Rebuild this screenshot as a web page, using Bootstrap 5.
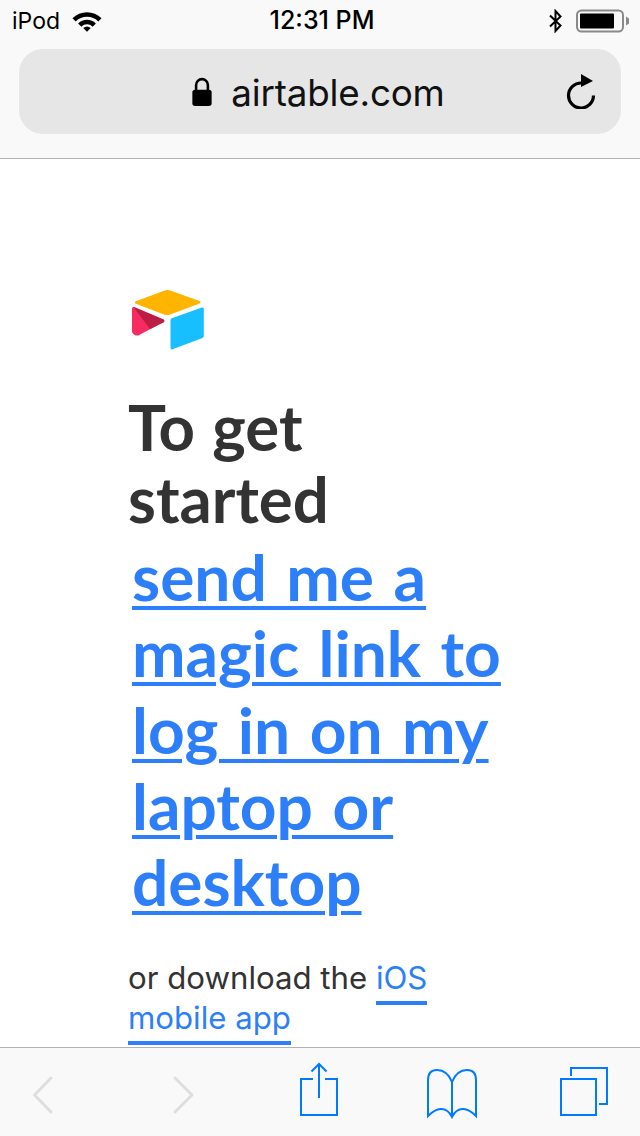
<!DOCTYPE html>
<html lang="en">
  <head>
    <meta charset="UTF-8" />
    <meta name="viewport" content="width=device-width, initial-scale=1.0" />
    <title>Airtable</title>
    <link href="https://cdn.jsdelivr.net/npm/bootstrap@5.3.0/dist/css/bootstrap.min.css" rel="stylesheet" />
    <style>
      body {
        background: #fff;
        font-family: Inter, "Liberation Sans", sans-serif;
        color: #333;
      }
      .phone-page {
        width: 640px;
        height: 1136px;
        overflow: hidden;
      }
      .safari-top {
        height: 159px;
        background: #f9f9f9;
        border-bottom: 1px solid #b2b2b2;
        padding: 0 11px 0 12px;
      }
      .status-row {
        height: 40px;
        padding-top: 2px;
        font-size: 23px;
        color: #000;
      }
      .status-side { width: 200px; }
      .status-time { font-weight: 500; font-size: 25px; padding-left: 3px; }
      .address-bar {
        height: 85px;
        margin: 9px 8px 0 7px;
        padding-right: 4px;
        background: #e6e6e6;
        border-radius: 24px;
      }
      .address-text {
        font-size: 36.8px;
        color: #111;
        letter-spacing: -0.2px;
        padding-top: 3px;
      }
      .lock-icon { margin-right: 2px; }
      .reload-icon {
        position: absolute;
        right: 24px;
        top: 24px;
      }
      .page-body {
        padding: 131px 0 0 128px;
        overflow: hidden;
      }
      .login-title {
        font-family: Lato, sans-serif;
        font-weight: 700;
        font-size: 63.5px;
        line-height: 72px;
        word-spacing: 2px;
        color: #333;
        margin: 41px 0 0 0;
      }
      .magic-link {
        display: block;
        margin: 4px 0 0 4px;
        font-family: Lato, sans-serif;
        font-weight: 700;
        font-size: 64px;
        line-height: 76.25px;
        word-spacing: 4px;
        color: #2d7ff9;
        text-decoration: underline;
        text-decoration-thickness: 4px;
        text-underline-offset: 5px;
      }
      .app-note {
        margin: 38px 0 0 0;
        font-size: 31.2px;
        line-height: 40px;
        color: #333;
      }
      .app-note a {
        color: #2d7ff9;
        text-decoration: none;
        border-bottom: 4px solid #2d7ff9;
        padding-bottom: 4px;
      }
      .safari-bottom {
        height: 89px;
        background: #f9f9f9;
        border-top: 1px solid #b2b2b2;
      }
    </style>
  </head>
  <body>
    <div class="phone-page d-flex flex-column">
      <header class="safari-top flex-shrink-0">
        <div class="status-row d-flex align-items-center justify-content-between">
          <div class="status-side d-flex align-items-center gap-2">
            <span class="me-1">iPod</span>
            <svg width="30" height="21" viewBox="0 0 32 22">
              <path d="M0.5 7.5 A22 22 0 0 1 31.5 7.5 L28 11 A17 17 0 0 0 4 11 Z" fill="#000" />
              <path d="M6.5 13 A13.5 13.5 0 0 1 25.5 13 L22 16.5 A8.5 8.5 0 0 0 10 16.5 Z" fill="#000" />
              <path d="M12 18 A6 6 0 0 1 20 18 L16 22 Z" fill="#000" />
            </svg>
          </div>
          <span class="status-time">12:31 PM</span>
          <div class="status-side d-flex align-items-center justify-content-end gap-2">
            <svg class="me-1" width="15" height="24" viewBox="0 0 14 24">
              <path d="M1.5 6.5 L12 16.5 L7 22 V2 L12 7.5 L1.5 17.5" fill="none" stroke="#000" stroke-width="2" />
            </svg>
            <svg width="54" height="24" viewBox="0 0 54 24">
              <rect x="2" y="1.5" width="46" height="21" rx="4.5" fill="none" stroke="#8a8a8a" stroke-width="2" />
              <rect x="5" y="4.5" width="34" height="15" rx="1" fill="#000" />
              <path d="M51 7.5 L54 9.5 V14.5 L51 16.5 Z" fill="#8a8a8a" />
            </svg>
          </div>
        </div>
        <div class="address-bar d-flex align-items-center justify-content-center gap-3 position-relative">
          <svg class="lock-icon" width="22" height="30" viewBox="0 0 20 28">
            <path d="M4.5 13 V7.5 a5.5 5.5 0 0 1 11 0 V13" fill="none" stroke="#000" stroke-width="2.4" />
            <rect x="1" y="12" width="18" height="15" rx="2.5" fill="#000" />
          </svg>
          <span class="address-text">airtable.com</span>
          <svg class="reload-icon" width="32" height="36" viewBox="0 0 32 36">
            <path d="M16.5 10 A12.5 12.5 0 1 0 28.5 22.5" fill="none" stroke="#000" stroke-width="3.2" />
            <path d="M16 1 L28 8 L16 14 Z" fill="#000" />
          </svg>
        </div>
      </header>

      <main class="page-body flex-grow-1">
        <svg class="d-block ms-1" width="72" height="60" viewBox="0 0 72 60">
          <path d="M32 0.8 L3.8 11.2 a1.4 1.4 0 0 0 0 2.6 L32.5 24.8 a7 7 0 0 0 5 0 L67.6 13.6 a1.4 1.4 0 0 0 0-2.6 L39 0.8 a9 9 0 0 0 -7 0 Z" fill="#ffb400" />
          <path d="M38.5 30.2 V57.8 a1.5 1.5 0 0 0 2 1.4 L70.5 48 a2 2 0 0 0 1.3 -1.9 V19 a1.5 1.5 0 0 0 -2 -1.4 L39.8 28.3 a2 2 0 0 0 -1.3 1.9 Z" fill="#18bfff" />
          <path d="M0 18.5 a1.6 1.6 0 0 1 2.3 -1.4 L31.5 29.5 a1.6 1.6 0 0 1 0 2.8 L8 44.5 a5 5 0 0 1 -8 -3 Z" fill="#f82b60" />
          <path d="M1.5 17 L31.5 29.5 a1.6 1.6 0 0 1 0 2.8 L18 39 Z" fill="#ba1e45" />
        </svg>
        <h1 class="login-title">To get<br />started</h1>
        <a class="magic-link" href="#">send me a<br />magic link to<br />log in on my<br />laptop or<br />desktop</a>
        <p class="app-note">or download the <a href="#">iOS</a><br /><a href="#">mobile app</a></p>
      </main>

      <footer class="safari-bottom flex-shrink-0">
        <svg class="d-block" width="640" height="88" viewBox="0 0 640 88">
          <g fill="none" stroke="#dedede" stroke-width="3" stroke-linecap="round" stroke-linejoin="round">
            <path d="M51 30 L34.5 47 L51 64" />
            <path d="M175 30 L192 47 L175 64" />
          </g>
          <g fill="none" stroke="#007aff" stroke-width="2">
            <path d="M313 31 H301 V67 H337 V31 H325" />
            <path d="M319 50 V17 M311.5 23.5 L319 16 L326.5 23.5" />
            <path d="M452 34 V69 M452 34 C448 24 442 22 437 22 C431 22 428 26 428 32 V68 C436 60 446 57 452 69 C458 57 468 60 476 68 V32 C476 26 473 22 467 22 C462 22 456 24 452 34 Z" />
            <rect x="561" y="31" width="35" height="36" />
            <path d="M571 28 V20 H607 V56 H599" />
          </g>
        </svg>
      </footer>
    </div>
    <script src="https://cdn.jsdelivr.net/npm/bootstrap@5.3.0/dist/js/bootstrap.bundle.min.js"></script>
  </body>
</html>
